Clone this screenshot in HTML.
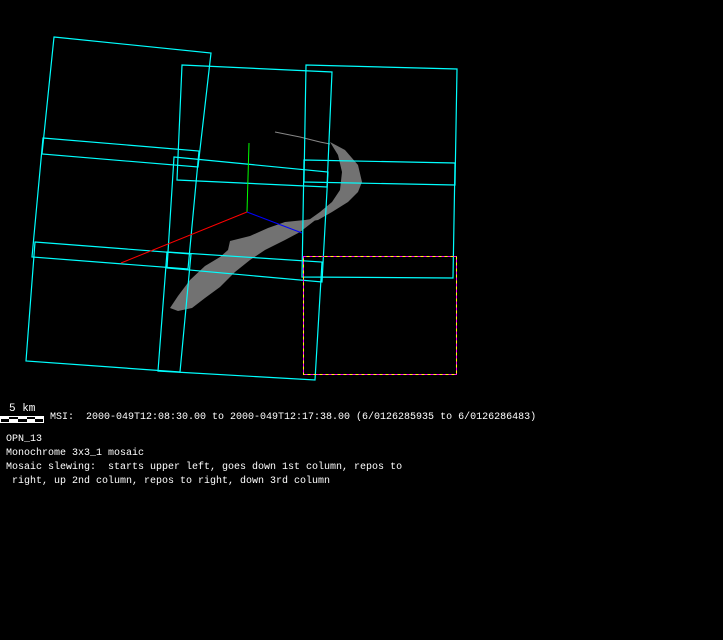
<!DOCTYPE html>
<html><head><meta charset="utf-8"><style>
html,body{margin:0;padding:0;background:#000;width:723px;height:640px;overflow:hidden}
.t{position:absolute;color:#fff;font-family:"Liberation Mono",monospace;font-size:10px;white-space:pre;line-height:14px}
</style></head><body>
<svg width="723" height="640" style="position:absolute;left:0;top:0">
<g fill="#727272" stroke="none">
<path d="M170,308 L178,296 L190,280 L205,266 L220,257 L228,250 L230,241 L250,236 L268,228 L285,222 L305,220 L318,218 L300,232 L285,240 L265,250 L250,260 L235,272 L220,287 L205,298 L192,308 L178,311 Z"/>
<path d="M318,220 L332,212 L348,202 L358,192 L362,182 L358,165 L345,150 L330,142 L338,155 L342,172 L340,190 L332,202 L320,212 L306,222 Z"/>
<polyline points="275,132 300,137 320,142 330,144" fill="none" stroke="#888" stroke-width="1"/>
</g>
<g fill="none" stroke="#0ff" stroke-width="1.2">
<polygon points="54,37 211,53 198,167 42,154"/>
<polygon points="43,138 199,151 188,269 32,257"/>
<polygon points="35,242 191,254 180,372 26,361"/>
<polygon points="182,65 332,72 327,187 177,180"/>
<polygon points="174,157 328,172 322,282 167,268"/>
<polygon points="167,252 322,262 315,380 158,371"/>
<polygon points="306,65 457,69 455,185 304,182"/>
<polygon points="304,160 455,163 453,278 302,277"/>
</g>
<rect x="303.5" y="256.5" width="153" height="118" fill="none" stroke="#ff0" stroke-width="1"/>
<rect x="303.5" y="256.5" width="153" height="118" fill="none" stroke="#f0f" stroke-width="1" stroke-dasharray="3,3"/>
<line x1="247" y1="212" x2="249" y2="143" stroke="#0f0" stroke-width="1"/>
<line x1="247" y1="212" x2="121" y2="263" stroke="#f00" stroke-width="1"/>
<line x1="247" y1="212" x2="302" y2="233" stroke="#00f" stroke-width="1"/>
<rect x="0.5" y="416.5" width="43" height="6" fill="#000" stroke="#fff"/>
<rect x="0" y="416" width="9" height="3" fill="#fff"/><rect x="18" y="416" width="9" height="3" fill="#fff"/><rect x="35" y="416" width="9" height="3" fill="#fff"/>
<rect x="9" y="419" width="9" height="4" fill="#fff"/><rect x="27" y="419" width="8" height="4" fill="#fff"/>
</svg>
<div class="t" style="left:9px;top:402px;font-size:11px">5 km</div>
<div class="t" style="left:50px;top:411px">MSI:  2000-049T12:08:30.00 to 2000-049T12:17:38.00 (6/0126285935 to 6/0126286483)</div>
<div class="t" style="left:6px;top:433px">OPN_13
Monochrome 3x3_1 mosaic
Mosaic slewing:  starts upper left, goes down 1st column, repos to
 right, up 2nd column, repos to right, down 3rd column</div>
</body></html>
